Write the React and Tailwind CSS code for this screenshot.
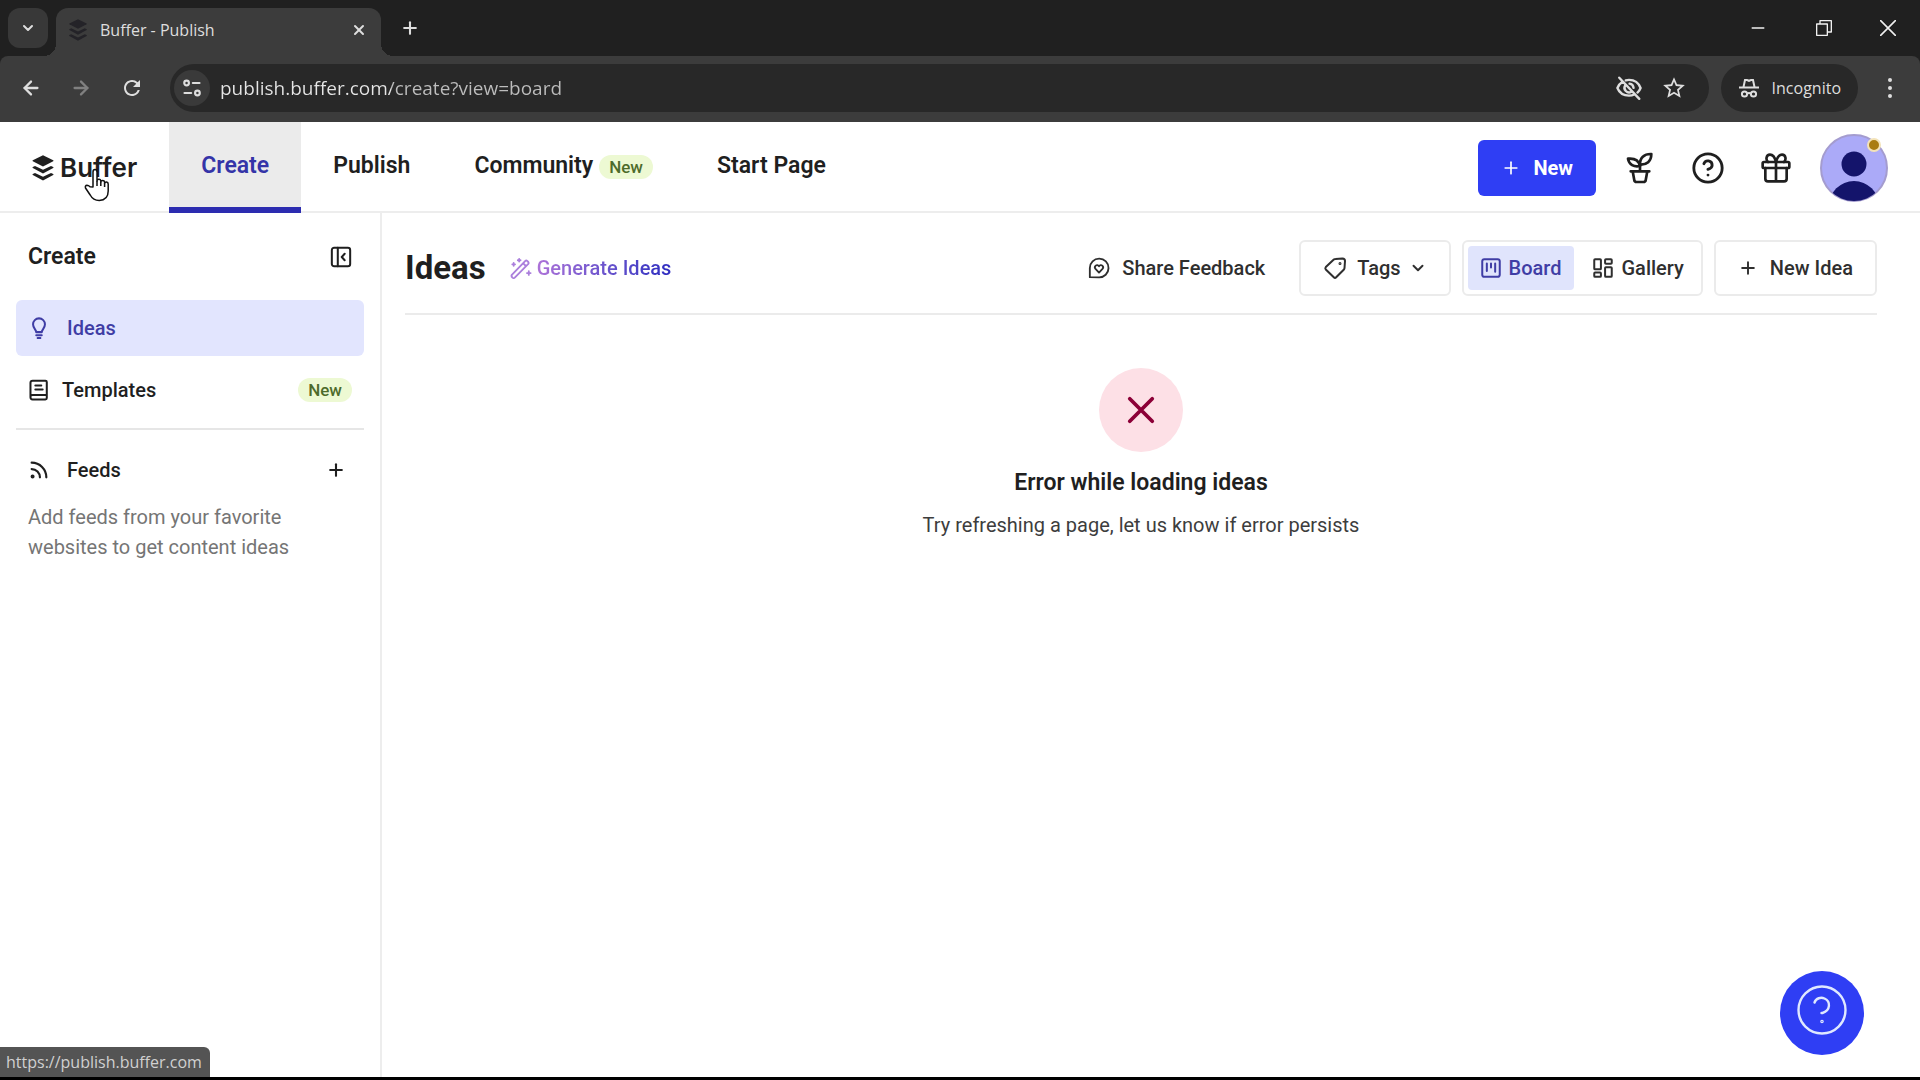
import React, { useState } from "react";
import clsx from "clsx";
import {
  ArrowLeft,
  ArrowRight,
  ChevronDown,
  CircleQuestionMark,
  Minus,
  Plus,
  Rss,
  X,
} from "lucide-react";
import { MdRefresh, MdStarBorder } from "react-icons/md";

function Icon({ className, children, strokeWidth = 2 }) {
  return (
    <svg
      viewBox="0 0 24 24"
      fill="none"
      stroke="currentColor"
      strokeWidth={strokeWidth}
      strokeLinecap="round"
      strokeLinejoin="round"
      aria-hidden="true"
      className={clsx("shrink-0", className)}
    >
      {children}
    </svg>
  );
}

function BufferMark({ className }) {
  return (
    <svg viewBox="0 0 22 26" fill="currentColor" aria-hidden="true" className={className}>
      <path d="M11 0.3 21.2 5.3c.5.3.5.7 0 1L11 11.4.8 6.300c-.5-.3-.5-.7 0-1z" />
      <path d="M.8 12 3 10.900 11 14.800l8-3.900 2.200 1.100c.5.300.5.700 0 1L11 18.600.8 13c-.5-.3-.5-.7 0-1z" />
      <path d="M.8 19 3 17.900 11 21.800l8-3.900 2.200 1.100c.5.300.5.700 0 1L11 25.600.8 20c-.5-.3-.5-.7 0-1z" />
    </svg>
  );
}

function IncognitoIcon({ className }) {
  return (
    <svg viewBox="0 0 22 20" fill="none" stroke="currentColor" strokeWidth="2" aria-hidden="true" className={className}>
      <path d="M5.500 9 7 2h2l2 .800L13 2h2l1.500 7M1 9.500h20" />
      <circle cx="6.500" cy="16" r="2.600" />
      <circle cx="15.500" cy="16" r="2.600" />
      <path d="M9 15.600q2-1 4 0" />
    </svg>
  );
}

function NewBadge() {
  return (
    <span className="rounded-full bg-[#edf9d3] px-[10px] text-[17px] leading-6 font-medium text-[#4d6b2b]">
      New
    </span>
  );
}

function BrowserChrome() {
  const [url, setUrl] = useState("publish.buffer.com/create?view=board");

  return (
    <div className="bg-[#202020] font-['Open_Sans','Noto_Sans',sans-serif] text-[#dedede]">
      <div className="flex h-14 items-center">
        <button
          type="button"
          aria-label="Search tabs"
          className="ml-2 flex h-10 w-10 items-center justify-center rounded-xl bg-[#383838]"
        >
          <ChevronDown className="h-4 w-4" strokeWidth={3} />
        </button>
        <div className="relative ml-2 flex h-12 w-[325px] items-center self-end rounded-t-xl bg-[#3c3c3c] pr-[14px] pb-[5px] pl-3">
          <span className="absolute bottom-0 -left-3 h-3 w-3 bg-[radial-gradient(circle_at_0_0,transparent_12px,#3c3c3c_12px)]" />
          <span className="absolute -right-3 bottom-0 h-3 w-3 bg-[radial-gradient(circle_at_100%_0,transparent_12px,#3c3c3c_12px)]" />
          <BufferMark className="h-[22px] w-5 text-[#242328]" />
          <span className="ml-3 text-[16px] leading-6">Buffer - Publish</span>
          <button type="button" aria-label="Close tab" className="ml-auto">
            <X className="h-4 w-4" strokeWidth={3} />
          </button>
        </div>
        <button type="button" aria-label="New tab" className="ml-[19px]">
          <Plus className="h-5 w-5" strokeWidth={2.500} />
        </button>
        <div className="ml-auto flex items-center gap-12 pr-6 text-[#f0f0f0]">
          <button type="button" aria-label="Minimize">
            <Minus className="h-5 w-5" strokeWidth={1.600} />
          </button>
          <button type="button" aria-label="Restore">
            <Icon className="h-4 w-4" strokeWidth={2}>
              <path d="M1 6h16v17H1zM6 6V1h17v17h-6" />
            </Icon>
          </button>
          <button type="button" aria-label="Close window">
            <Icon className="h-4 w-4" strokeWidth={2.400}>
              <path d="M1 1 23 23M23 1 1 23" />
            </Icon>
          </button>
        </div>
      </div>
      <div className="flex h-[66px] items-center rounded-t-lg bg-[#3c3c3c] pr-5 pb-[2px] pl-5">
        <button type="button" aria-label="Back">
          <ArrowLeft className="h-[22px] w-[22px]" strokeWidth={2.500} />
        </button>
        <button type="button" aria-label="Forward" className="ml-7 text-[#808080]">
          <ArrowRight className="h-[22px] w-[22px]" strokeWidth={2.500} />
        </button>
        <button type="button" aria-label="Reload" className="ml-7">
          <MdRefresh className="h-6 w-6" />
        </button>
        <div className="ml-[26px] flex h-12 min-w-0 flex-1 items-center rounded-full bg-[#282828] pr-[22px] pl-1">
          <button
            type="button"
            aria-label="View site information"
            className="flex h-9 w-9 items-center justify-center rounded-full bg-[#3a3a3a]"
          >
            <Icon className="h-5 w-5" strokeWidth={2.600}>
              <circle cx="5.500" cy="6" r="2.800" />
              <path d="M13 6h8M3 18h8" />
              <circle cx="18.500" cy="18" r="2.800" />
            </Icon>
          </button>
          <input
            type="text"
            aria-label="Address and search bar"
            value={url}
            onChange={(e) => setUrl(e.target.value)}
            className="ml-[10px] min-w-0 flex-1 bg-[linear-gradient(90deg,#e6e6e6_171px,#bdbdbd_171px)] bg-clip-text text-[19px] text-transparent caret-white outline-none"
          />
          <button type="button" aria-label="Third-party cookies blocked">
            <Icon className="h-[26px] w-[26px]" strokeWidth={2.200}>
              <path d="M3 2.500 21.500 22M6 6.200C3.500 7.800 2 10 1.300 12c1.700 4.200 5.700 7 10.700 7 1.800 0 3.400-.3 4.800-1M9 4.900C9.900 4.600 11 4.500 12 4.500c5 0 9 3 10.700 7.500-.6 1.600-1.600 3-2.900 4.200" />
              <path d="M8.500 9.500a4.300 4.300 0 0 0 5.800 6M12.500 8a4.300 4.300 0 0 1 3.700 3.800" />
            </Icon>
          </button>
          <button type="button" aria-label="Bookmark this tab" className="ml-[19px]">
            <MdStarBorder className="h-[26px] w-[26px]" />
          </button>
        </div>
        <button
          type="button"
          className="ml-3 flex h-12 items-center gap-3 rounded-full bg-[#282828] px-[17px] text-[16px] leading-6"
        >
          <IncognitoIcon className="h-5 w-[22px]" />
          Incognito
        </button>
        <button type="button" aria-label="Browser menu" className="ml-[22px]">
          <svg viewBox="0 0 20 20" fill="currentColor" className="h-5 w-5">
            <circle cx="10" cy="2" r="2" />
            <circle cx="10" cy="10" r="2" />
            <circle cx="10" cy="18" r="2" />
          </svg>
        </button>
      </div>
    </div>
  );
}

const navItems = [
  { label: "Create", active: true },
  { label: "Publish" },
  { label: "Community", isNew: true },
  { label: "Start Page" },
];

function TopNav() {
  return (
    <header className="relative flex h-[91px] items-stretch border-b-2 border-[#ededed]">
      <a href="#home" className="mr-8 ml-8 flex items-center gap-[6px] pt-[2px]">
        <BufferMark className="h-[26px] w-[22px]" />
        <span className="font-['Inter',sans-serif] text-[26px] leading-8 font-semibold">Buffer</span>
      </a>
      <nav className="flex">
        {navItems.map((item) => (
          <a
            key={item.label}
            href={`#${item.label}`}
            className={clsx(
              "-mb-[2px] flex items-center gap-[6px] border-b-[6px] px-8 pt-1 text-[23px] font-semibold",
              item.active
                ? "border-[#2c2cb0] bg-[#ebebeb] text-[#3434a8]"
                : "border-transparent",
            )}
          >
            {item.label}
            {item.isNew && <NewBadge />}
          </a>
        ))}
      </nav>
      <div className="ml-auto flex items-center pt-[2px] pr-8">
        <button
          type="button"
          className="flex h-14 items-center gap-3 rounded-md bg-[#2f3ef4] px-[23px] text-[20px] font-bold text-white"
        >
          <Plus className="h-5 w-5" />
          New
        </button>
        <button type="button" aria-label="Streaks" className="ml-7">
          <Icon className="h-8 w-8">
            <path d="M5 14.500h14M6.500 14.500l1.200 6.500q.2 1.500 1.800 1.500h5q1.600 0 1.800-1.500l1.200-6.500M12 14V9.500" />
            <path d="M12 10.500C11 6 8 4.500 3 5c.8 4.500 4.500 6.500 9 5.500zM12 9.500C11.800 4.500 15 1.300 20.500 1.500 20.500 7 17 9.800 12 9.500z" />
          </Icon>
        </button>
        <button type="button" aria-label="Help" className="ml-[35px]">
          <CircleQuestionMark className="h-[34px] w-[34px]" />
        </button>
        <button type="button" aria-label="What's new" className="ml-[35px]">
          <Icon className="h-8 w-8">
            <rect x="2" y="7.500" width="20" height="4.500" rx="1" />
            <path d="M4 12v8q0 2 2 2h12q2 0 2-2v-8M12 7.500V22" />
            <path d="M12 7.500C11 3.500 9.500 2 7.500 2 4.500 2 4.200 6 6 7.500M12 7.500C13 3.500 14.500 2 16.500 2c3 0 3.300 4 1.500 5.500" />
          </Icon>
        </button>
        <button type="button" aria-label="Account" className="relative ml-7">
          <svg viewBox="0 0 68 68" className="h-[68px] w-[68px]">
            <defs>
              <clipPath id="avatar">
                <circle cx="34" cy="34" r="33" />
              </clipPath>
            </defs>
            <circle cx="34" cy="34" r="33" fill="#abaaf8" stroke="#a49ccf" strokeWidth="2" />
            <g clipPath="url(#avatar)" fill="#14146b">
              <circle cx="34" cy="30" r="12.500" />
              <circle cx="34" cy="72" r="25" />
            </g>
          </svg>
          <span className="absolute top-1 right-[7px] h-[14px] w-[14px] rounded-full border-2 border-[#f3e3b8] bg-[#a97c10]" />
        </button>
      </div>
      {/* hand pointer over the logo */}
      <svg viewBox="0 0 26 34" className="absolute top-[46px] left-[84px] h-[34px] w-[26px]" aria-hidden="true">
        <path
          d="M9 19V4q0-2.500 2-2.500T13 4v9q0-1.800 1.900-1.800t1.900 1.800v1q.2-1.500 1.900-1.500t1.900 1.700v1q.3-1.300 1.900-1.200 1.700.2 1.700 2v7q0 9-9 9.500-6 0-9-5.500L1.500 20Q.8 17.500 3 17.300q1.500 0 3 1.500z"
          fill="#fff"
          stroke="#111"
          strokeWidth="1.500"
          strokeLinejoin="round"
        />
        <path d="M13 13v5M16.800 14v4M20.600 15v4" stroke="#111" strokeWidth="1.500" />
      </svg>
    </header>
  );
}

function Sidebar() {
  return (
    <aside className="w-[382px] shrink-0 border-r-2 border-[#ededed] px-4 pt-6">
      <div className="flex h-10 items-center justify-between pr-3 pl-3">
        <h2 className="text-[23px] font-semibold">Create</h2>
        <button type="button" aria-label="Collapse sidebar">
          <Icon className="h-[22px] w-[22px]" strokeWidth={2.200}>
            <rect x="2" y="2" width="20" height="20" rx="2.500" />
            <path d="M8.500 2v20M16 8.500 12.800 12l3.200 3.500" />
          </Icon>
        </button>
      </div>

      <a
        href="#ideas"
        className="mt-[23px] flex h-14 items-center rounded-md bg-[#e2e5fe] px-3 text-[20px] font-medium text-[#3f3da5]"
      >
        <Icon className="h-[22px] w-[22px]" strokeWidth={2.200}>
          <path d="M9 16.500c0-3-3.500-4-3.500-8.500a6.500 6.500 0 0 1 13 0c0 4.500-3.500 5.500-3.500 8.500zM9 20h6M10.500 23h3" />
        </Icon>
        <span className="ml-[17px]">Ideas</span>
      </a>
      <a href="#templates" className="mt-[6px] flex h-14 items-center px-3 text-[20px] font-medium">
        <Icon className="h-[22px] w-[22px]" strokeWidth={2.200}>
          <path d="M5 1.800h14q1.500 0 1.500 1.500v17.500q0 1.500-1.500 1.500H5q-2.300 0-2.300-2.500V4Q2.700 1.800 5 1.800zM2.700 19q.3-1.500 2.300-1.500h15.500M8 7h6.500M8 11.500h8" />
        </Icon>
        <span className="mr-auto ml-3">Templates</span>
        <NewBadge />
      </a>

      <hr className="mt-[10px] border-t-2 border-[#e6e6e6]" />

      <div className="mt-5 flex h-10 items-center pr-[18px] pl-3">
        <Rss className="h-[22px] w-[22px]" strokeWidth={2.400} />
        <h3 className="mr-auto ml-[17px] text-[20px] font-medium">Feeds</h3>
        <button type="button" aria-label="Add feed">
          <Plus className="h-5 w-5" strokeWidth={2.500} />
        </button>
      </div>
      <p className="mt-3 w-[280px] pl-3 text-[20px] leading-[30px] text-[#757575]">
        Add feeds from your favorite websites to get content ideas
      </p>
    </aside>
  );
}

function IdeasToolbar() {
  const [view, setView] = useState("board");

  return (
    <div className="flex h-[102px] items-center border-b-2 border-[#ebebeb] pt-[10px]">
      <h1 className="text-[33px] font-bold">Ideas</h1>
      <button type="button" className="ml-6 flex items-center gap-[5px] text-[20px] font-medium">
        <Icon className="h-[22px] w-[22px] text-[#ab7fdc]">
          <path d="m2 19.500 14.500-15q1.200-1.200 2.500 0l.7.700q1.200 1.200 0 2.500L5.200 22.500Q4 23.500 2.700 22.500q-1.700-1.500-.7-3zM14.500 7l2.800 2.800M4 6.500v3M2.500 8h3M10 2v3M8.500 3.500h3M20.500 15.500v4M18.500 17.500h4" />
        </Icon>
        <span className="bg-linear-to-r from-[#ad72d8] to-[#2f2cc0] bg-clip-text text-transparent">
          Generate Ideas
        </span>
      </button>

      <div className="ml-auto flex items-center text-[20px] font-medium text-[#2f2f2f]">
        <button type="button" className="mr-[34px] flex items-center gap-3">
          <Icon className="h-[22px] w-[22px]">
            <path d="M2 22V12A10.200 10.200 0 1 1 12 22.200z" />
            <path d="M12 17 8.200 13c-2.200-2.700 1.500-6 3.800-3 2.300-3 6 .3 3.800 3z" />
          </Icon>
          Share Feedback
        </button>
        <button
          type="button"
          className="flex h-14 items-center rounded-md border-2 border-[#ebebeb] px-[22px]"
        >
          <Icon className="h-6 w-6">
            <path d="m12.500 3 7-.500q2.500 0 2.500 2.500l-.500 7q0 1-.8 1.800l-7.500 7.500q-1.200 1.200-2.400 0l-8-7.800q-1-1.200 0-2.400l8-7.500q.7-.6 1.700-.6z" />
            <circle cx="17" cy="7.500" r=".5" fill="currentColor" />
          </Icon>
          <span className="ml-[10px]">Tags</span>
          <ChevronDown className="ml-2 h-[18px] w-[18px]" strokeWidth={2.600} />
        </button>
        <div className="ml-[11px] flex h-14 items-center rounded-md border-2 border-[#ebebeb] px-1">
          <button
            type="button"
            aria-pressed={view === "board"}
            onClick={() => setView("board")}
            className={clsx(
              "flex h-11 items-center gap-2 rounded px-[13px]",
              view === "board" && "bg-[#e0e4fc] text-[#3f3da5]",
            )}
          >
            <Icon className="h-5 w-5" strokeWidth={2.400}>
              <rect x="1.500" y="1.500" width="21" height="21" rx="2.500" />
              <path d="M7 6.500v9M12 6.500v5M17 6.500v10" />
            </Icon>
            Board
          </button>
          <button
            type="button"
            aria-pressed={view === "gallery"}
            onClick={() => setView("gallery")}
            className={clsx(
              "ml-[6px] flex h-11 items-center gap-2 rounded px-[13px]",
              view === "gallery" && "bg-[#e0e4fc] text-[#3f3da5]",
            )}
          >
            <Icon className="h-5 w-5" strokeWidth={2.400}>
              <rect x="1.500" y="1.500" width="8" height="12" rx="1" />
              <rect x="14.500" y="1.500" width="8" height="5.500" rx="1" />
              <rect x="14.500" y="11" width="8" height="11.500" rx="1" />
              <rect x="1.500" y="17.500" width="8" height="5" rx="1" />
            </Icon>
            Gallery
          </button>
        </div>
        <button
          type="button"
          className="ml-[11px] flex h-14 items-center gap-3 rounded-md border-2 border-[#ebebeb] px-[22px]"
        >
          <Plus className="h-5 w-5" strokeWidth={2.300} />
          New Idea
        </button>
      </div>
    </div>
  );
}

export default function App() {
  return (
    <div className="relative flex min-h-screen flex-col border-b-3 border-black bg-white font-['Roboto',sans-serif] text-[#1f1f1f]">
      <BrowserChrome />
      <TopNav />
      <div className="flex flex-1">
        <Sidebar />
        <main className="min-w-0 flex-1 pr-[43px] pl-[23px]">
          <IdeasToolbar />
          <section className="flex flex-col items-center pt-[53px] text-center">
            <div className="flex h-[84px] w-[84px] items-center justify-center rounded-full bg-[#fde0e6] text-[#8c0037]">
              <Icon className="h-[30px] w-[30px]" strokeWidth={3}>
                <path d="M3 3 21 21M21 3 3 21" />
              </Icon>
            </div>
            <h2 className="mt-[15px] text-[23px] leading-8 font-semibold">Error while loading ideas</h2>
            <p className="mt-[10px] text-[20px] leading-8 text-[#3d3d3d]">
              Try refreshing a page, let us know if error persists
            </p>
          </section>
        </main>
      </div>

      <button
        type="button"
        aria-label="Open help"
        className="absolute right-14 bottom-[22px] flex h-[84px] w-[84px] items-center justify-center rounded-full bg-[#2f3ef4] pb-[6px] text-[#dfe8ff]"
      >
        <svg viewBox="0 0 50 50" fill="none" stroke="currentColor" strokeWidth="2.400" strokeLinecap="round" className="h-[50px] w-[50px]">
          <circle cx="25" cy="25" r="23.500" />
          <path d="M17.500 17.500C19 13 24 12 27.500 13.500c6.500 3 6 12-2 14.500h-1" />
          <circle cx="25" cy="36.500" r=".6" />
        </svg>
      </button>
      <div className="absolute bottom-0 left-0 flex h-[30px] items-center rounded-tr-md bg-[#545454] pr-2 pl-[6px] font-['Open_Sans','Noto_Sans',sans-serif] text-[16px] text-[#d0d0d0]">
        https://publish.buffer.com
      </div>
    </div>
  );
}
